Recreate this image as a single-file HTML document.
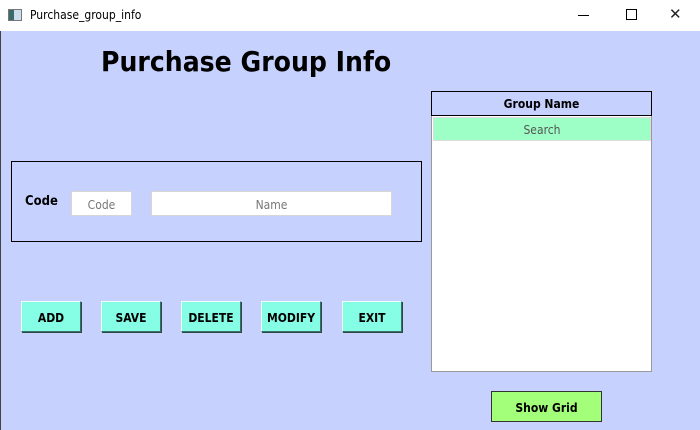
<!DOCTYPE html>
<html><head><style>
body{margin:0;width:700px;height:430px;overflow:hidden;background:#c6d1fe;font-family:Tahoma,"DejaVu Sans Condensed","Liberation Sans",sans-serif;position:relative}
div{position:absolute;box-sizing:border-box}
.t{left:0;top:0;width:700px;height:31px;background:#fff;font-size:12px}
.btn{height:31px;width:60px;top:301px;background:#86fde5;border:1px solid;border-color:#eefffb #3c6d66 #3c6d66 #eefffb;box-shadow:1px 1px 0 #2a4a45;font-weight:bold;font-size:12px;text-align:center;line-height:33px}
.inp{background:#fff;border:1px solid #d6d6d6;color:#777;font-size:12px;text-align:center;line-height:26px}
</style></head><body>
<div class="t">
<div style="left:8px;top:9px;width:14px;height:12px;border:1px solid #777;background:linear-gradient(90deg,#3a6a6a 40%,#cde 40%)"></div>
<div style="left:30px;top:8px">Purchase_group_info</div>
<div style="left:578px;top:15px;width:11px;height:1px;background:#000"></div>
<div style="left:626px;top:9px;width:11px;height:11px;border:1px solid #000"></div>
<div style="left:669px;top:5px;font-size:15px;font-family:'DejaVu Sans',sans-serif;color:#222">✕</div>
</div>
<div style="left:0;top:31px;width:1px;height:399px;background:#444"></div>
<div style="left:101px;top:45px;font-size:28px;font-weight:bold;letter-spacing:0">Purchase Group Info</div>
<div style="left:11px;top:161px;width:411px;height:81px;border:1px solid #000"></div>
<div style="left:25px;top:194px;font-size:13px;font-weight:bold">Code</div>
<div class="inp" style="left:71px;top:191px;width:61px;height:25px">Code</div>
<div class="inp" style="left:151px;top:191px;width:241px;height:25px">Name</div>
<div class="btn" style="left:21px">ADD</div>
<div class="btn" style="left:101px">SAVE</div>
<div class="btn" style="left:181px">DELETE</div>
<div class="btn" style="left:261px">MODIFY</div>
<div class="btn" style="left:342px">EXIT</div>
<div style="left:431px;top:91px;width:221px;height:25px;border:1px solid #000;font-size:12px;font-weight:bold;text-align:center;line-height:25px">Group Name</div>
<div style="left:431px;top:116px;width:221px;height:256px;background:#fff;border:1px solid #999;border-top:none"></div>
<div style="left:433px;top:117px;width:218px;height:24px;background:#9effc6;border:1px solid #ddd;color:#555;font-size:12px;text-align:center;line-height:24px">Search</div>
<div style="left:491px;top:391px;width:111px;height:31px;background:#a3ff79;border:1px solid #333;font-size:12px;font-weight:bold;text-align:center;line-height:32px">Show Grid</div>
</body></html>
